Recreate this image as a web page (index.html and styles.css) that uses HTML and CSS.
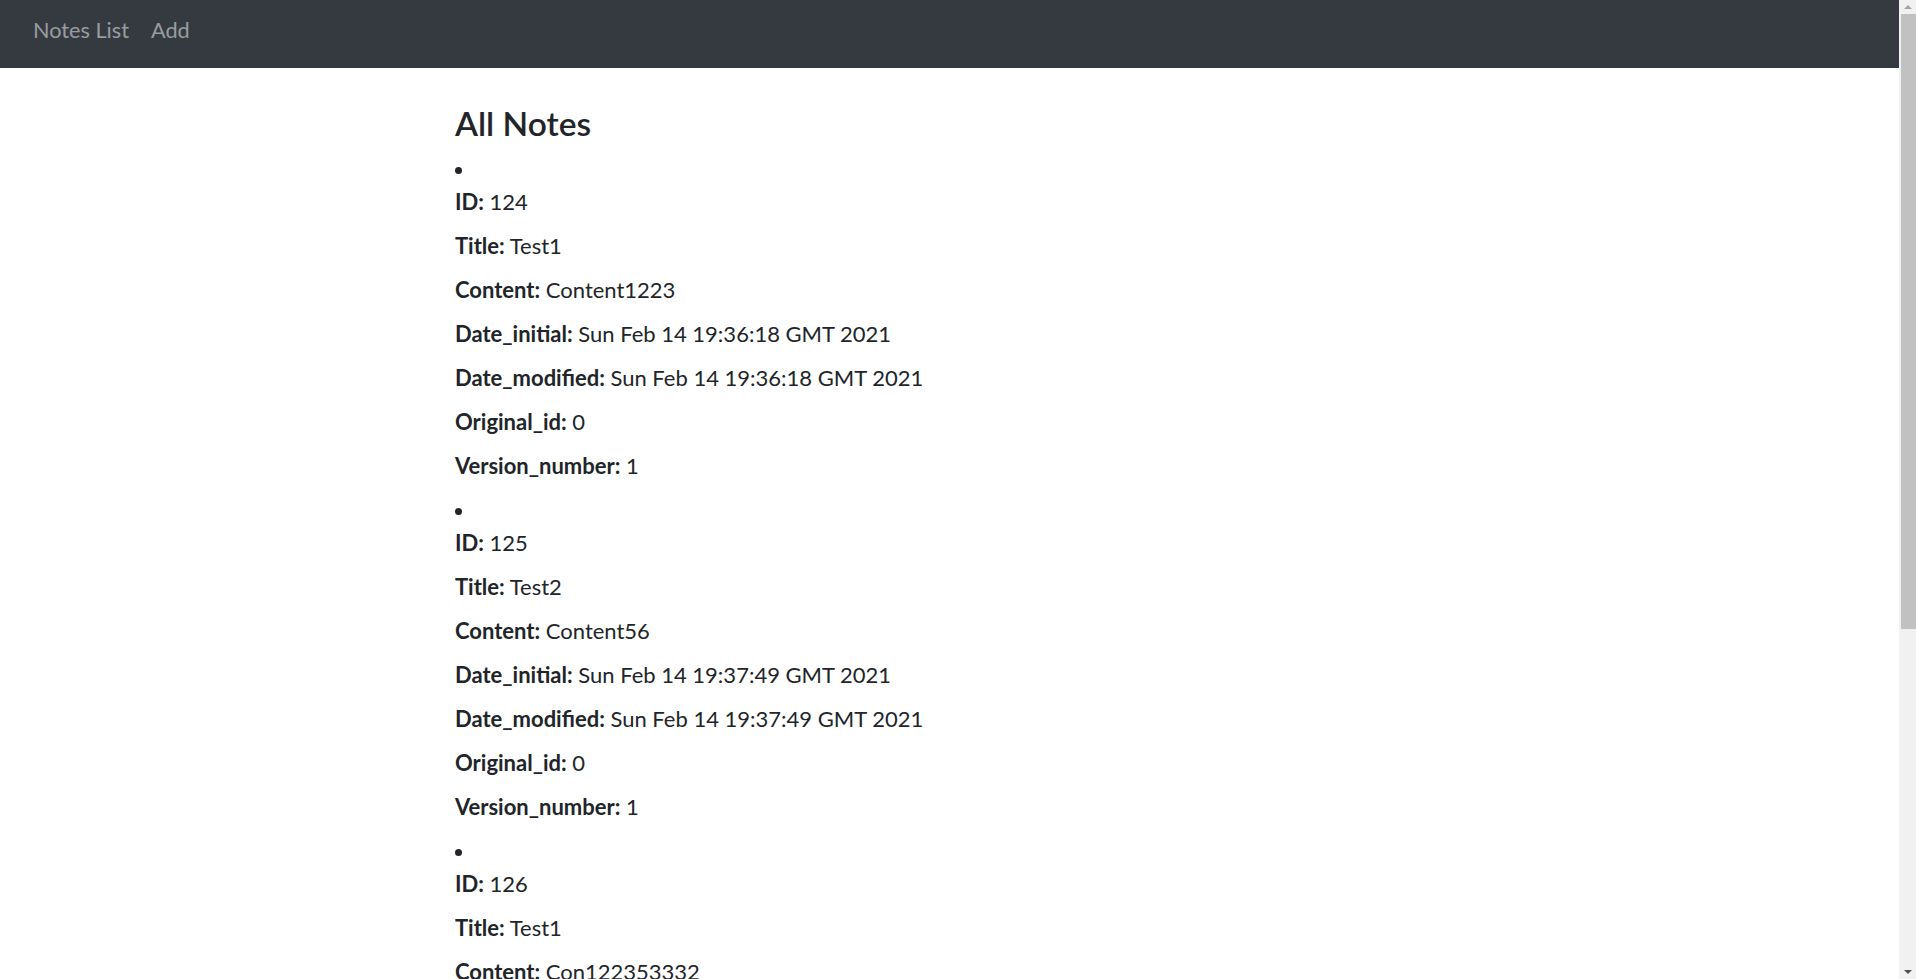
FILE: index.html
```html
<!DOCTYPE html>
<html lang="en">
<head>
<meta charset="utf-8">
<title>Notes</title>
<link rel="stylesheet" href="styles.css">
</head>
<body>
<div class="viewport">
  <nav class="navbar">
    <a class="nav-link" href="#">Notes List</a>
    <a class="nav-link" href="#">Add</a>
  </nav>
  <main class="container">
    <h2 class="page-title">All Notes</h2>
    <ul class="notes">
      <li class="note">
        <p><b>ID:</b> 124</p>
        <p><b>Title:</b> Test1</p>
        <p><b>Content:</b> Content1223</p>
        <p><b>Date_initial:</b> Sun Feb 14 19:36:18 GMT 2021</p>
        <p><b>Date_modified:</b> Sun Feb 14 19:36:18 GMT 2021</p>
        <p><b>Original_id:</b> 0</p>
        <p><b>Version_number:</b> 1</p>
      </li>
      <li class="note">
        <p><b>ID:</b> 125</p>
        <p><b>Title:</b> Test2</p>
        <p><b>Content:</b> Content56</p>
        <p><b>Date_initial:</b> Sun Feb 14 19:37:49 GMT 2021</p>
        <p><b>Date_modified:</b> Sun Feb 14 19:37:49 GMT 2021</p>
        <p><b>Original_id:</b> 0</p>
        <p><b>Version_number:</b> 1</p>
      </li>
      <li class="note">
        <p><b>ID:</b> 126</p>
        <p><b>Title:</b> Test1</p>
        <p><b>Content:</b> Con122353332</p>
        <p><b>Date_initial:</b> Sun Feb 14 19:38:02 GMT 2021</p>
        <p><b>Date_modified:</b> Sun Feb 14 19:38:02 GMT 2021</p>
        <p><b>Original_id:</b> 124</p>
        <p><b>Version_number:</b> 2</p>
      </li>
    </ul>
  </main>
</div>
<div class="scrollbar" aria-hidden="true">
  <div class="sb-button"><span class="sb-arrow-up"></span></div>
  <div class="sb-track"><div class="sb-thumb"></div></div>
  <div class="sb-button"><span class="sb-arrow-down"></span></div>
</div>
</body>
</html>
```

FILE: styles.css
```css
html, body {
  margin: 0;
  padding: 0;
  height: 100%;
}
body {
  display: flex;
  overflow: hidden;
  font-family: "Lato", "Open Sans", "Liberation Sans", sans-serif;
  font-size: 22px;
  line-height: 33px;
  color: #212529;
  background: #fff;
}
.viewport {
  flex: 1;
  min-width: 0;
  overflow: hidden;
}
.navbar {
  display: flex;
  align-items: flex-start;
  height: 68px;
  padding: 15px 0 0 22px;
  background: #343a40;
  box-sizing: border-box;
}
.nav-link {
  color: rgba(255, 255, 255, 0.5);
  text-decoration: none;
  padding: 0 11px;
  font-size: 21.7px;
  line-height: 31px;
}
.container {
  max-width: 989px;
  margin: 0 auto;
}
.page-title {
  font-size: 33.5px;
  font-weight: 600;
  line-height: 38.4px;
  margin: 36px 0 10px;
}
.notes {
  margin: 0;
  padding: 0;
  list-style: disc inside;
}
.note p {
  margin: 0 0 11px;
}
.note b {
  font-weight: 700;
}
.scrollbar {
  width: 17px;
  flex: none;
  display: flex;
  flex-direction: column;
  background: #f1f1f1;
}
.sb-button {
  height: 14px;
  display: flex;
  align-items: center;
  justify-content: center;
  flex: none;
}
.sb-arrow-up {
  width: 0;
  height: 0;
  border-left: 4px solid transparent;
  border-right: 4px solid transparent;
  border-bottom: 4px solid #a3a3a3;
}
.sb-arrow-down {
  width: 0;
  height: 0;
  border-left: 4px solid transparent;
  border-right: 4px solid transparent;
  border-top: 4px solid #505050;
}
.sb-track {
  flex: 1;
  padding-left: 2px;
}
.sb-thumb {
  height: 615px;
  background: #c1c1c1;
}
```
